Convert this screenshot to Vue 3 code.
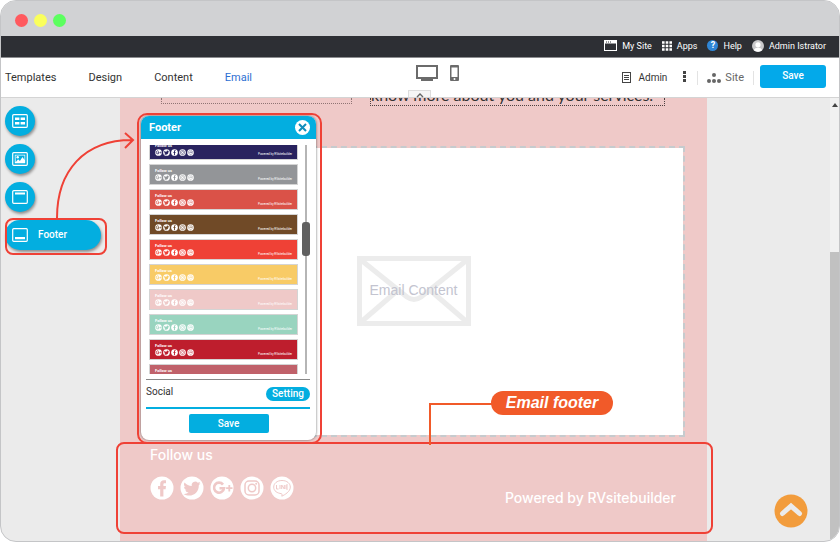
<script setup>
const menu = ['Templates', 'Design', 'Content', 'Email']
const themes = ['#29235f', '#939598', '#da5248', '#704a27', '#ef4136', '#f8cb66', '#efc9c8', '#99d4bf', '#be1e2d', '#c0616a']
const networks = ['facebook', 'twitter', 'google', 'instagram', 'line']
const minis = ['google', 'twitter', 'facebook', 'instagram', 'line']
const tools = ['layout', 'image', 'header']
</script>

<template>
  <div class="window">
    <svg class="defs" width="0" height="0" aria-hidden="true">
      <symbol id="facebook" viewBox="0 0 24 24"><circle cx="12" cy="12" r="11.500" fill="#fff" /><path d="M10.200 20.500v-7.300H8V10h2.200V8c0-2.600 1.500-3.800 3.800-3.800h2v3h-1.300c-1 0-1.300.5-1.300 1.200V10H16l-.4 3.200h-2.200v7.300z" fill="currentColor" /></symbol>
      <symbol id="twitter" viewBox="0 0 24 24"><circle cx="12" cy="12" r="11.500" fill="#fff" /><path d="M20.500 7.300l-2 .6a3.500 3.500 0 0 0 1.500-2l-2.200.9a3.500 3.500 0 0 0-6 3.200A10 10 0 0 1 4.600 6.400a3.500 3.500 0 0 0 1.100 4.700l-1.600-.4a3.500 3.500 0 0 0 2.800 3.400l-1.600.1a3.500 3.500 0 0 0 3.300 2.400A7 7 0 0 1 3.500 18c7.500 4.300 15.500-.4 15.300-8.700z" fill="currentColor" /></symbol>
      <symbol id="google" viewBox="0 0 24 24"><circle cx="12" cy="12" r="11.500" fill="#fff" /><path d="M13 8.600A5 5 0 1 0 14 12.300H9.500" fill="none" stroke="currentColor" stroke-width="2.600" /><path d="M19.300 9v6.400M16.100 12.200h6.400" stroke="currentColor" stroke-width="1.800" /></symbol>
      <symbol id="instagram" viewBox="0 0 24 24"><circle cx="12" cy="12" r="11.500" fill="#fff" /><rect x="5" y="5" width="14" height="14" rx="4" fill="none" stroke="currentColor" stroke-width="1.500" /><circle cx="12" cy="12" r="3.700" fill="none" stroke="currentColor" stroke-width="1.500" /><circle cx="16.200" cy="7.800" r="1" fill="currentColor" /></symbol>
      <symbol id="line" viewBox="0 0 24 24"><circle cx="12" cy="12" r="11.500" fill="#fff" /><path d="M12 4.500c-5 0-8.300 3-8.300 6.600 0 4 3.500 6 7.800 6.600.8.200.5 1.200.3 2.500 3-1.500 8.500-4.500 8.500-9.100 0-3.600-3.300-6.600-8.300-6.600z" fill="none" stroke="currentColor" stroke-width="1" /><path d="M6.500 9v4h2M10 9v4M11.700 13V9l2.600 4V9M18 9h-2v4h2M16 11h2" fill="none" stroke="currentColor" stroke-width="1" /></symbol>
      <symbol id="layout" viewBox="0 0 16 14"><rect x=".7" y=".7" width="14.600" height="12.600" rx="1" fill="none" stroke="#fff" stroke-width="1.200" /><path d="M3 3.500h4.400v2.600H3zM8.600 3.500H13v2.600H8.600zM3 7.900h4.400v2.600H3zM8.600 7.900H13v2.600H8.600z" fill="#fff" /></symbol>
      <symbol id="image" viewBox="0 0 16 14"><rect x=".7" y=".7" width="14.600" height="12.600" rx="1" fill="none" stroke="#fff" stroke-width="1.200" /><path d="M2.800 2.800h10.400v8.400H2.800z" fill="#fff" /><path d="M3.700 10.300l2.400-3 1.800 1.700 2.600-4 2 3V3.600h-9z" fill="#03aee0" /><circle cx="5.700" cy="5.200" r="1.200" fill="#fff" /></symbol>
      <symbol id="header" viewBox="0 0 16 14"><rect x=".7" y=".7" width="14.600" height="12.600" rx="1" fill="none" stroke="#fff" stroke-width="1.200" /><path d="M3 2.600h10v2H3z" fill="#fff" /></symbol>
      <symbol id="footer" viewBox="0 0 16 14"><rect x=".7" y=".7" width="14.600" height="12.600" rx="1" fill="none" stroke="#fff" stroke-width="1.200" /><path d="M3 9h10v2.300H3z" fill="#fff" /></symbol>
    </svg>

    <div class="titlebar"><i class="dot red"></i><i class="dot yellow"></i><i class="dot green"></i></div>

    <nav class="topbar">
      <a href="#"><svg width="13" height="11" viewBox="0 0 13 11"><rect x=".5" y=".5" width="12" height="10" fill="none" stroke="#fff" /><path d="M1 1h11v2.500H1z" fill="#fff" /><path d="M2 2h1M4 2h1M6 2h1" stroke="#2d2f34" /></svg>My Site</a>
      <a href="#"><svg width="10" height="10" viewBox="0 0 10 10"><path d="M0 1.500h10M0 5h10M0 8.500h10" stroke="#fff" stroke-width="2.600" stroke-dasharray="2.600 1.100" /></svg>Apps</a>
      <a href="#"><span class="help">?</span>Help</a>
      <a href="#"><svg width="12" height="12" viewBox="0 0 12 12"><circle cx="6" cy="6" r="6" fill="#c9c9cb" /><circle cx="6" cy="4.800" r="2.600" fill="#fff" /><path d="M1.800 10a4.500 3.500 0 0 1 8.400 0A6 6 0 0 1 1.800 10z" fill="#fff" /></svg>Admin Istrator</a>
    </nav>

    <header class="menubar">
      <nav class="menu"><a v-for="m in menu" :key="m" href="#" :class="{ active: m === 'Email' }">{{ m }}</a></nav>
      <div class="devices">
        <button aria-label="Desktop"><svg width="22" height="16" viewBox="0 0 22 16"><path d="M1 1h20v12H1z" fill="none" stroke="#6b6b6b" stroke-width="2" /><path d="M1 12h20v2H1zM5 14h12v2H5z" fill="#6b6b6b" /></svg></button>
        <button aria-label="Mobile"><svg width="9" height="16" viewBox="0 0 9 16"><rect width="9" height="16" rx="1" fill="#6b6b6b" /><path d="M1.500 2.500h6v9.500h-6z" fill="#fff" /><circle cx="4.500" cy="14" r="1" fill="#fff" /></svg></button>
      </div>
      <div class="actions">
        <a href="#" class="admin"><svg width="9" height="11" viewBox="0 0 9 11"><rect x=".5" y=".5" width="8" height="10" fill="none" stroke="#444" /><path d="M2 3.500h5M2 5.500h5M2 7.500h5" stroke="#444" /></svg>Admin</a>
        <button class="more" aria-label="More"><svg width="3" height="11" viewBox="0 0 3 11"><path d="M0 0h3v3H0zM0 4h3v3H0zM0 8h3v3H0z" fill="#444" /></svg></button>
        <a href="#" class="site"><svg width="14" height="10" viewBox="0 0 14 10"><g fill="#666"><circle cx="7" cy="2" r="2" /><circle cx="2" cy="8" r="2" /><circle cx="7" cy="8" r="2" /><circle cx="12" cy="8" r="2" /></g></svg>Site</a>
        <button class="primary">Save</button>
      </div>
      <button class="collapse" aria-label="Collapse"><svg width="8" height="5" viewBox="0 0 8 5"><path d="M1 4l3-3 3 3" fill="none" stroke="#666" stroke-width="1.400" /></svg></button>
    </header>

    <main class="workspace">
      <aside class="tools">
        <button v-for="t in tools" :key="t" class="tool" :aria-label="t"><svg width="16" height="14"><use :href="'#' + t" /></svg></button>
        <button class="tool wide"><svg width="16" height="14"><use href="#footer" /></svg>Footer</button>
      </aside>

      <article class="email">
        <div class="intro"><div class="cell"></div><div class="cell text"><p>know more about you and your services.</p></div></div>
        <section class="content">
          <div class="placeholder">
            <svg width="114" height="70" viewBox="0 0 114 70"><g fill="none" stroke="#ececec" stroke-width="5"><rect x="2.500" y="2.500" width="109" height="65" /><path d="M4 4l46 37q7 5 14 0l46-37M4 66l36-31M110 66l-36-31" /></g></svg>
            <span>Email Content</span>
          </div>
        </section>
        <footer class="mail-footer">
          <h2>Follow us</h2>
          <div class="social"><a v-for="n in networks" :key="n" href="#" :aria-label="n"><svg width="24" height="24"><use :href="'#' + n" /></svg></a></div>
          <p>Powered by RVsitebuilder</p>
        </footer>
      </article>

      <div class="scrollbar"><svg width="6" height="4" viewBox="0 0 6 4"><path d="M0 4l3-4 3 4z" fill="#444" /></svg><i></i></div>

      <section class="panel">
        <header><h3>Footer</h3><button aria-label="Close"><svg width="9" height="9" viewBox="0 0 9 9"><path d="M1 1l7 7M8 1l-7 7" stroke="#118dbb" stroke-width="2" /></svg></button></header>
        <div class="list">
          <ul>
            <li v-for="c in themes" :key="c" :style="{ backgroundColor: c, color: c }">
              <b>Follow us</b>
              <div><span class="icons"><svg v-for="n in minis" :key="n" width="7" height="7"><use :href="'#' + n" /></svg></span><small>Powered by RVsitebuilder</small></div>
            </li>
          </ul>
          <div class="track"><i></i></div>
        </div>
        <div class="setting"><span>Social</span><button>Setting</button></div>
        <button class="save">Save</button>
      </section>

      <div class="mark mark-tool"></div>
      <div class="mark mark-panel"></div>
      <div class="mark mark-footer"></div>
      <svg class="arrow" width="84" height="90" viewBox="0 0 84 90" fill="none" stroke="#ef4136" stroke-width="2"><path d="M5 87C5 40 32 9 80 9M73 2l8 7-8 8" /></svg>
      <svg class="leader" width="64" height="42" viewBox="0 0 64 42" fill="none" stroke="#f15a29" stroke-width="2"><path d="M1 42V1h63" /></svg>
      <div class="callout">Email footer</div>
      <button class="totop" aria-label="Back to top"><svg width="34" height="34" viewBox="0 0 34 34"><circle cx="17" cy="17" r="16.500" fill="#f29c3c" /><path d="M8.500 19.500L17 12l8.500 7.500" fill="none" stroke="#ebebeb" stroke-width="5" stroke-linecap="round" /></svg></button>
    </main>
  </div>
</template>

<style>
body { background: #fff; }
</style>

<style scoped>
* { box-sizing: border-box; margin: 0; padding: 0; }
button { border: 0; background: none; font: inherit; color: inherit; }
a { color: inherit; text-decoration: none; }
svg { display: block; flex: none; }
.defs { position: absolute; }
.window { display: flex; flex-direction: column; min-height: 100vh; overflow: hidden; border: 1px solid #c4c5c7; border-radius: 16px; font: 11px/14px Roboto, sans-serif; color: #333; background: #ebebeb; }
.titlebar { display: flex; align-items: center; gap: 6px; height: 35px; padding: 4px 14px 0; background: #d1d2d4; }
.dot { width: 13px; height: 13px; border-radius: 50%; }
.red { background: #ff5a5f; }
.yellow { background: #faff5c; }
.green { background: #5cff5f; }
.topbar { display: flex; align-items: center; justify-content: flex-end; gap: 10px; height: 22px; padding: 0 13px 2px 0; background: #2d2f34; border-bottom: 1px solid #8c8d90; color: #fff; font-size: 9px; }
.topbar a { display: flex; align-items: center; gap: 5px; }
.help { width: 11px; height: 11px; border-radius: 50%; background: #2f86d6; font: bold 9px/11px Roboto, sans-serif; text-align: center; }
.menubar { position: relative; display: grid; grid-template-columns: 1fr auto 1fr; align-items: center; height: 40px; padding: 0 13px 0 4px; background: #fff; border-bottom: 1px solid #d4d4d4; }
.menu { display: flex; gap: 32px; }
.menu .active { color: #2d6fd2; }
.devices { display: flex; align-items: center; gap: 12px; padding: 0 0 9px 44px; }
.actions { display: flex; align-items: center; justify-content: flex-end; }
.admin, .site { display: flex; align-items: center; gap: 7px; }
.admin { font-size: 10px; }
.more { padding: 0 11px 2px 16px; }
.site { gap: 4px; padding: 0 9px; border-left: 1px solid #e3e3e3; border-right: 1px solid #e3e3e3; color: #666; }
.primary { width: 66px; height: 23px; margin: 0 0 3px 6px; border-radius: 3px; background: #03a9ea; color: #fff; font-weight: 500; font-size: 10px; }
.collapse { position: absolute; left: 407px; bottom: 0; display: flex; justify-content: center; width: 23px; height: 7px; padding-top: 2px; border: 1px solid #ddd; border-bottom: 0; background: #f6f6f6; }
.workspace { position: relative; flex: 1; display: grid; grid-template-columns: 119px 1fr 132px; }
.tools { display: flex; flex-direction: column; align-items: flex-start; gap: 8px; padding: 8px 0 0 4px; }
.tool { display: flex; align-items: center; gap: 10px; width: 30px; height: 30px; padding-left: 7px; border-radius: 15px; background: #03aee0; color: #fff; box-shadow: 1px 2px 3px #0006; font-size: 10px; font-weight: 500; }
.wide { width: 96px; }
.email { display: flex; flex-direction: column; background: #efc9c8; }
.intro { display: flex; justify-content: space-between; align-items: flex-start; padding: 0 42px 0 41px; }
.cell { width: 191px; height: 6px; border: 1px dotted #8f7474; border-top: 0; }
.text { display: flex; align-items: flex-end; width: 295px; height: 8px; overflow: hidden; border-color: #4c4040; }
.text p { font: 16px/20px Lato, sans-serif; white-space: nowrap; }
.content { display: grid; place-items: center; height: 291px; margin: 40px 22px 0; padding-bottom: 2px; border: 2px dashed #c6cbce; background: #fff; background-clip: padding-box; }
.placeholder { display: grid; place-items: center; }
.placeholder > * { grid-area: 1 / 1; }
.placeholder span { padding-bottom: 2px; font: 14px/16px "Liberation Sans", sans-serif; color: #c3c4d0; }
.mail-footer { display: grid; grid-template-columns: 1fr auto; padding: 8px 31px 0 30px; color: #fff; font-family: Inter, sans-serif; }
.mail-footer h2 { grid-column: 1 / 3; font-size: 14px; line-height: 20px; font-weight: 500; }
.mail-footer p { padding-top: 24px; font-size: 14px; line-height: 18px; font-weight: 500; }
.social { display: flex; gap: 6px; padding-top: 11px; color: #efc9c8; }
.scrollbar { display: flex; flex-direction: column; align-items: center; justify-self: end; width: 9px; padding-top: 5px; background: #f1f1f1; }
.scrollbar i { flex: 1; width: 9px; margin-top: 145px; background: #c1c1c1; }
.panel { position: absolute; left: 140px; top: 18px; width: 175px; height: 324px; border-radius: 8px; overflow: hidden; background: #fff; box-shadow: 0 0 2px 1px #0004; }
.panel header { display: flex; align-items: center; justify-content: space-between; height: 23px; padding: 0 6px 0 8px; background: #03aee0; color: #fff; }
.panel h3 { font-size: 11px; font-weight: 700; }
.panel header button { display: grid; place-items: center; width: 15px; height: 15px; border-radius: 50%; background: #fff; }
.list { display: flex; justify-content: space-between; height: 229px; margin: 6px 6px 0 8px; overflow: hidden; }
.panel ul { display: flex; flex-direction: column; gap: 4px; width: 149px; margin-top: -6px; list-style: none; }
.panel li { flex: none; height: 21px; padding: 3px 5px; border: 1px solid #d4d4d4; }
.panel li b { display: block; color: #fff; font-size: 4px; line-height: 5px; }
.panel li div { display: flex; align-items: flex-start; justify-content: space-between; padding-top: 1px; }
.icons { display: flex; gap: 1px; }
.panel small { padding-top: 3px; color: #fff; font-size: 3px; line-height: 4px; }
.track { display: flex; justify-content: center; width: 8px; background: linear-gradient(#b5b5b5, #b5b5b5) center / 2px 100% no-repeat; }
.track i { width: 8px; height: 34px; margin-top: 77px; border-radius: 3px; background: #606060; }
.setting { display: flex; align-items: flex-start; justify-content: space-between; height: 30px; margin: 5px 6px 5px 5px; padding-top: 5px; border-top: 1px solid #888; border-bottom: 2px solid #03aee0; font-size: 10px; }
.setting button { width: 44px; height: 14px; margin-top: 2px; border-radius: 7px; background: #03aee0; color: #fff; font-weight: 500; line-height: 14px; }
.save { display: block; width: 80px; height: 19px; margin: 0 auto; border-radius: 2px; background: #03aee0; color: #fff; font-weight: 500; font-size: 10px; }
.mark { position: absolute; border: 2px solid #ef4136; border-radius: 8px; }
.mark-tool { left: 4px; top: 120px; width: 102px; height: 37px; }
.mark-panel { left: 136px; top: 15px; width: 185px; height: 331px; border-radius: 10px; }
.mark-footer { left: 115px; right: 126px; top: 344px; height: 92px; }
.arrow { position: absolute; left: 51px; top: 33px; }
.leader { position: absolute; left: 428px; top: 305px; }
.callout { position: absolute; left: 490px; top: 293px; width: 122px; height: 24px; border-radius: 12px; background: #f15a29; color: #fff; font: italic bold 16px/24px "Liberation Sans", sans-serif; text-align: center; }
.totop { position: absolute; right: 31px; top: 396px; }
</style>
